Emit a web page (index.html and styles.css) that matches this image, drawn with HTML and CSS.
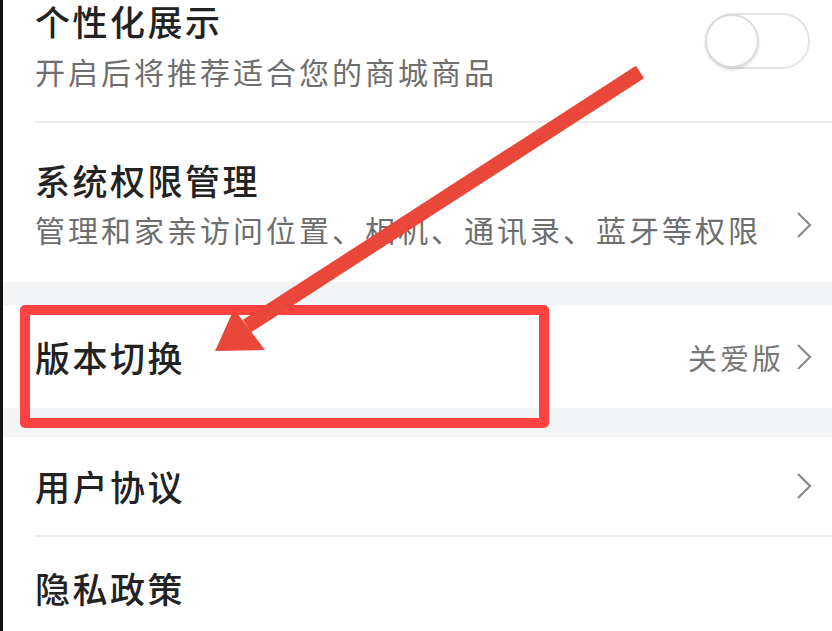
FILE: index.html
```html
<!DOCTYPE html>
<html lang="zh-CN">
<head>
  <meta charset="UTF-8">
  <meta name="viewport" content="width=device-width, initial-scale=1.0">
  <title>设置</title>
  <link rel="stylesheet" href="styles.css">
</head>
<body>

  <div class="settings">

    <div class="item item-first">
      <div class="item-text">
        <div class="item-title">个性化展示</div>
        <div class="item-sub">开启后将推荐适合您的商城商品</div>
      </div>
      <div class="switch"><span class="knob"></span></div>
    </div>

    <div class="item item-second">
      <div class="item-text">
        <div class="item-title">系统权限管理</div>
        <div class="item-sub">管理和家亲访问位置、相机、通讯录、蓝牙等权限</div>
      </div>
      <svg class="chevron" viewBox="0 0 16 28"><polyline points="2,2 14,14 2,26"/></svg>
    </div>

    <div class="band band-top"></div>

    <div class="item item-single item-version">
      <div class="item-title">版本切换</div>
      <div class="item-right">
        <span class="item-value">关爱版</span>
        <svg class="chevron" viewBox="0 0 16 28"><polyline points="2,2 14,14 2,26"/></svg>
      </div>
    </div>

    <div class="band band-bottom"></div>

    <div class="item item-single item-line">
      <div class="item-title">用户协议</div>
      <svg class="chevron" viewBox="0 0 16 28"><polyline points="2,2 14,14 2,26"/></svg>
    </div>

    <div class="item item-single">
      <div class="item-title">隐私政策</div>
    </div>

  </div>

  <!-- annotation drawn over the screenshot -->
  <div class="mark-box"></div>
  <svg class="mark-arrow" viewBox="0 0 832 631">
    <line x1="637" y1="72" x2="244" y2="326"/>
    <polygon points="212,351 231,309 262,350"/>
  </svg>

</body>
</html>
```

FILE: styles.css
```css
* {
  box-sizing: border-box;
}

body {
  margin: 0;
  padding: 0;
  width: 832px;
  height: 631px;
  overflow: hidden;
  background: #fff;
  border-left: 3px solid #111;
  font-family: "Noto Sans CJK SC", "Noto Sans", sans-serif;
  position: relative;
}

.settings {
  display: flex;
  flex-direction: column;
}

.item {
  display: flex;
  align-items: center;
  justify-content: space-between;
  padding-left: 32px;
  padding-right: 20px;
}

.item-text {
  display: flex;
  flex-direction: column;
  gap: 10px;
}

.item-title {
  font-size: 35px;
  line-height: 40px;
  letter-spacing: 2.5px;
  font-weight: 500;
  color: #222;
}

.item-sub {
  font-size: 30px;
  line-height: 40px;
  letter-spacing: 3px;
  white-space: nowrap;
  color: #6e6e6e;
}

.item-first {
  align-items: flex-start;
  height: 123px;
  padding-top: 1px;
  border-bottom: 2px solid #ececec;
  margin-left: 32px;
  padding-left: 0;
}

.item-second {
  height: 159px;
  padding-top: 4px;
}

.item-second .item-text {
  gap: 9px;
}

.item-second .chevron {
  margin-top: 40px;
}

.item-single {
  height: 102px;
}

.item-version {
  height: 103px;
}

.item-line {
  height: 100px;
  margin-left: 32px;
  padding-left: 0;
  border-bottom: 2px solid #ececec;
}

.band {
  background: #f3f4f6;
}

.band-top {
  height: 23px;
}

.band-bottom {
  height: 29px;
}

.item-right {
  display: flex;
  align-items: center;
  gap: 12px;
}

.item-value {
  font-size: 29px;
  letter-spacing: 3px;
  color: #777;
}

.chevron {
  width: 16px;
  height: 28px;
  fill: none;
  stroke: #8a8a8a;
  stroke-width: 2.2;
  flex-shrink: 0;
}

.switch {
  width: 105px;
  height: 56px;
  margin-top: 12px;
  margin-right: 2px;
  border: 2px solid #e4e4e4;
  border-radius: 28px;
  background: #fff;
  display: flex;
  align-items: center;
}

.knob {
  width: 54px;
  height: 54px;
  margin-left: -2px;
  border-radius: 50%;
  border: 2px solid #dcdcdc;
  box-shadow: 0 2px 3px rgba(0, 0, 0, 0.12);
  background: #fff;
}

.mark-box {
  position: absolute;
  left: 17px;
  top: 305px;
  width: 529px;
  height: 123px;
  border: 10px solid #ff4242;
  border-radius: 5px;
}

.mark-arrow {
  position: absolute;
  left: 0;
  top: 0;
  width: 832px;
  height: 631px;
}

.mark-arrow line {
  stroke: #e9473a;
  stroke-width: 15;
}

.mark-arrow polygon {
  fill: #e9473a;
}
```
